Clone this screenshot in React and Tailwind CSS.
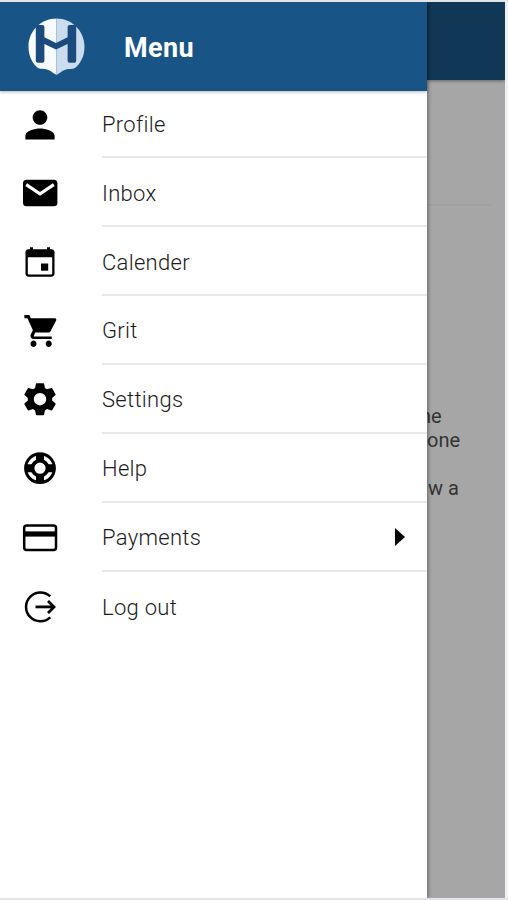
import React from "react";

const PersonIcon = () => (
  <g transform="translate(20 19.8) scale(1.83) translate(-12 -12)">
    <path d="M12 12c2.21 0 4-1.79 4-4s-1.79-4-4-4-4 1.79-4 4 1.79 4 4 4zm0 2c-2.67 0-8 1.34-8 4v2h16v-2c0-2.66-5.33-4-8-4z" />
  </g>
);

const MailIcon = () => (
  <>
    <rect x="3" y="6.7" width="34.4" height="26.6" rx="3.5" />
    <path d="M6.2 11.6 20 20.8l13.8-9.2" fill="none" stroke="#fff" strokeWidth="3.2" />
  </>
);

const CalendarIcon = () => (
  <>
    <path
      fillRule="evenodd"
      d="M10 5.3h3v2h14v-2h3v2h1.3c1.8 0 3.2 1.2 3.2 3v21.5c0 1.7-1.4 2.9-3.2 2.9H8.7c-1.8 0-3.2-1.2-3.2-2.9V10.3c0-1.8 1.4-3 3.2-3H10zM7.8 15.2v16.2c0 .6.4 1 1 1h22.4c.6 0 1-.4 1-1v-16.2z"
    />
    <rect x="21" y="21.5" width="7.2" height="7.2" />
  </>
);

const CartIcon = () => (
  <g transform="translate(20.2 20) scale(1.52 1.6) translate(-11.4 -12)">
    <path d="M7 18c-1.1 0-1.99.9-1.99 2S5.9 22 7 22s2-.9 2-2-.9-2-2-2zM1 2v2h2l3.6 7.59-1.35 2.45c-.16.28-.25.61-.25.96 0 1.1.9 2 2 2h12v-1.5H7.42c-.14 0-.25-.11-.25-.25l.03-.12.9-2.13h8.45c.75 0 1.41-.41 1.75-1.03l3.58-6.49c.08-.14.12-.31.12-.48 0-.55-.45-.9-1-.9H5.21l-.94-2.1H1zm16 16c-1.1 0-1.99.9-1.99 2s.89 2 1.99 2 2-.9 2-2-.9-2-2-2z" />
  </g>
);

const SettingsIcon = () => (
  <g transform="translate(0 -0.8)">
    <circle cx="20" cy="20" r="9.2" fill="none" stroke="#000" strokeWidth="6" />
    {[0, 60, 120, 180, 240, 300].map((angle) => (
      <path key={angle} transform={`rotate(${angle} 20 20)`} d="M16.6 4h6.8q.6 0 .7.6l1 5h-10.2l1-5q.1-.6.7-.6z" />
    ))}
  </g>
);

const HelpIcon = () => (
  <g transform="translate(0 -0.8)">
    <circle cx="20" cy="20" r="14.4" fill="none" stroke="#000" strokeWidth="3" />
    <circle cx="20" cy="20" r="7.5" fill="none" stroke="#000" strokeWidth="3.8" />
    <path d="M16 5.500h8v8h-8zM16 26.500h8v8h-8zM5.500 16h8v8h-8zM26.500 16h8v8h-8z" />
  </g>
);

const CardIcon = () => (
  <>
    <rect x="4.2" y="7.6" width="31.8" height="24.4" rx="2.5" fill="none" stroke="#000" strokeWidth="2.5" />
    <path d="M4 13.4h32v5.200H4z" />
  </>
);

const LogoutIcon = () => (
  <g fill="none" stroke="#000" strokeWidth="2.5">
    <path d="M30.3 9.4A14.4 14.4 0 1 0 30.3 30.4" />
    <path d="M15.5 19.9h18" strokeWidth="2.8" />
    <path d="m28 13.900 6 6-6 6" strokeWidth="2.8" />
  </g>
);

const items = [
  { label: "Profile", Icon: PersonIcon, row: "h-[67px]", pad: "pt-[3px]" },
  { label: "Inbox", Icon: MailIcon, row: "h-[69px]", pad: "pt-[5px]" },
  { label: "Calender", Icon: CalendarIcon, row: "h-[69px]", pad: "pt-[4px]" },
  { label: "Grit", Icon: CartIcon, row: "h-[69px]", pad: "pt-[3px]" },
  { label: "Settings", Icon: SettingsIcon, row: "h-[69px]", pad: "pt-[3px]" },
  { label: "Help", Icon: HelpIcon, row: "h-[69px]", pad: "pt-[3px]" },
  { label: "Payments", Icon: CardIcon, row: "h-[69px]", pad: "pt-[2px]", submenu: true },
  { label: "Log out", Icon: LogoutIcon, row: "h-[70px]", pad: "pt-px", last: true },
];

function Logo() {
  return (
    <svg viewBox="0 0 58 58" className="ml-[27px] h-[58px] w-[58px]">
      <path d="M29.5 .5C14 .5 1.5 13 1.5 28.5c0 10 4 17 9.5 21.5 3 1.5 6 .5 9 1.5 4 1 5 3 9.5 5.5z" fill="#f8fbfd" />
      <path d="M29.5 .5C45 .5 57.5 13 57.5 28.5c0 10-4 17-9.5 21.5-3 1.5-6 .5-9 1.5-4 1-5 3-9.5 5.5z" fill="#cbdcef" />
      <path d="M8.8 9q0-2 2-2h4.600q2 0 2 2v10.200l11.600 5.800 11.600-5.800V9q0-2 2-2h4.600q2 0 2 2v33.700q0 2-2 2h-4.600q-2 0-2-2V26L29 31.600 17.400 26v16.700q0 2-2 2h-4.600q-2 0-2-2z" fill="#1b4a7c" />
    </svg>
  );
}

function MenuItem({ item }) {
  const { label, Icon, row, pad, submenu, last } = item;
  return (
    <li className={`flex pl-5 ${row}`}>
      <div className="flex w-[82px] shrink-0 items-center">
        <svg viewBox="0 0 40 40" className="h-10 w-10"><Icon /></svg>
      </div>
      <div className={`flex flex-1 items-center justify-between pr-[22px] ${last ? "" : "border-b-2 border-[#e9e9e9]"}`}>
        <span className={`text-[22px] leading-7 font-light tracking-[0.3px] text-[#1c1c1c] ${pad}`}>{label}</span>
        {submenu && (
          <svg viewBox="0 0 10 18" className="h-[18px] w-[10px]"><path d="M0 0 10 9 0 18z" /></svg>
        )}
      </div>
    </li>
  );
}

export default function App() {
  return (
    <div className="flex h-[900px] w-[508px] overflow-hidden border-y-2 border-[#e4e5e8] bg-white font-['Roboto',sans-serif]">
      <nav className="z-10 w-[427px] shrink-0 bg-white shadow-[1px_0_4px_rgba(0,0,0,0.4)]">
        <header className="flex h-[89px] items-center bg-[#185586] shadow-[0_1px_3px_rgba(0,0,0,0.3)]">
          <Logo />
          <h1 className="ml-[39px] pt-[3px] text-[27px] font-bold tracking-[0.4px] text-white">Menu</h1>
        </header>
        <ul>
          {items.map((item) => <MenuItem key={item.label} item={item} />)}
        </ul>
      </nav>
      <main className="w-[78px] shrink-0 bg-[#a6a6a6] text-[20px] leading-6 text-[#333]">
        <div className="h-[78px] bg-[#103755] shadow-[0_1px_3px_rgba(0,0,0,0.4)]" />
        <div className="mr-[14px] h-[126px] border-b-2 border-[#a0a0a0]" />
        <div className="mt-[198px] flex flex-col items-start">
          <p className="-ml-[7px]">ne</p>
          <p>one</p>
          <p className="mt-6 ml-[1px]">w a</p>
        </div>
      </main>
      <div className="flex-1 bg-[#f0f0f2]" />
    </div>
  );
}
